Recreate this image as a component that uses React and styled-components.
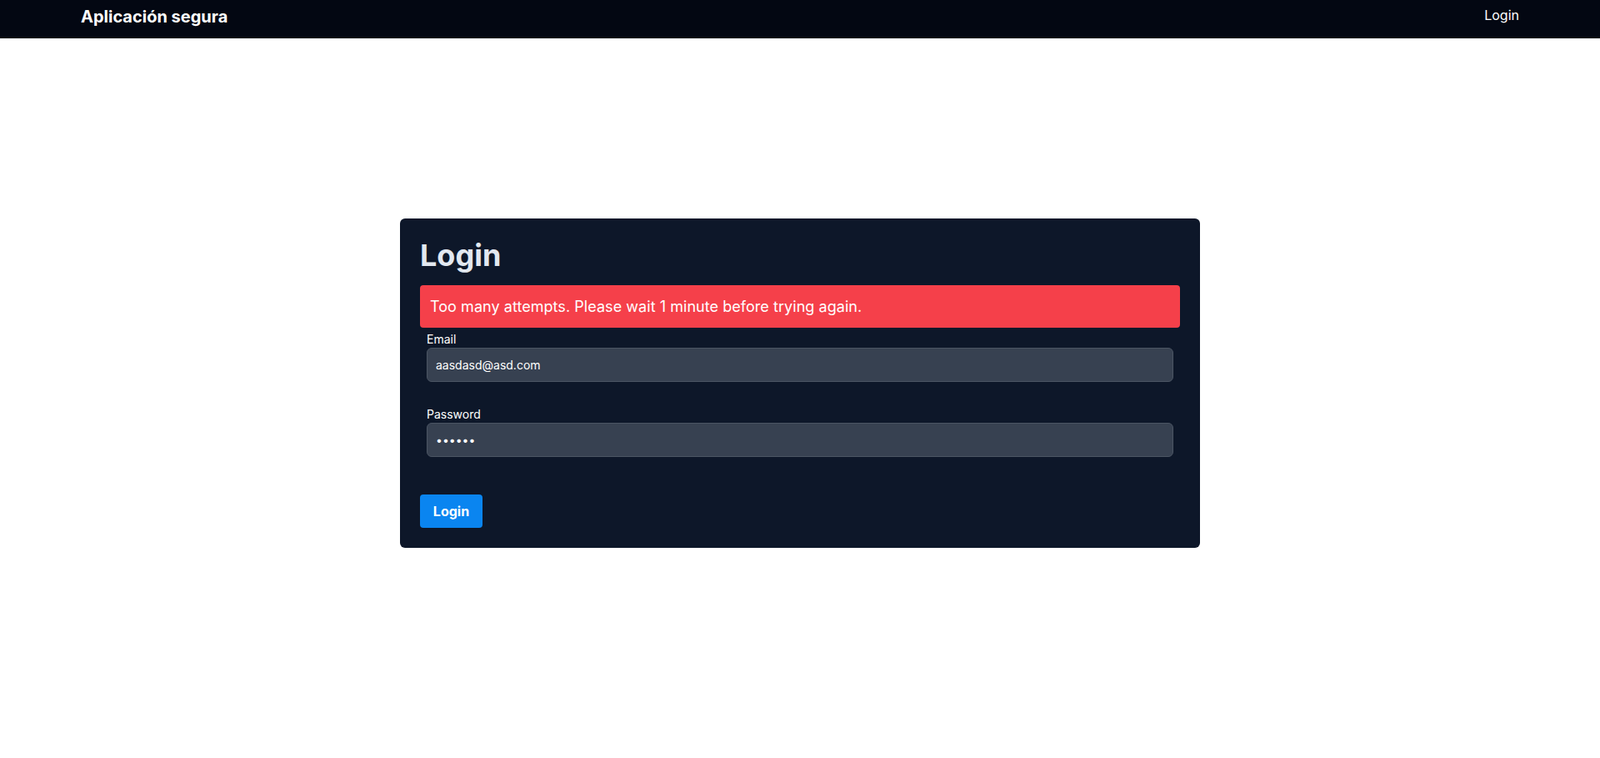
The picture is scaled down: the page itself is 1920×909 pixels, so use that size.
import React, { useState } from 'react';
import styled, { createGlobalStyle } from 'styled-components';

const GlobalStyle = createGlobalStyle`
    * {
        box-sizing: border-box;
    }

    body {
        margin: 0;
        background: #fff;
        font-family: Inter, "Noto Sans", sans-serif;
    }
`;

const Navbar = styled.nav`
    height: 46px;
    display: flex;
    align-items: flex-start;
    justify-content: space-between;
    padding: 6px 97px 0;
    background: #030712;
`;

const Brand = styled.span`
    font-size: 20px;
    line-height: 28px;
    font-weight: 700;
    color: #fff;
`;

const NavLink = styled.a`
    font-size: 16px;
    line-height: 24px;
    color: #fff;
    text-decoration: none;
    cursor: pointer;
`;

const Main = styled.main`
    padding-top: 216px;
`;

const Card = styled.div`
    width: 960px;
    margin: 0 auto;
    padding: 24px;
    background: #0d1729;
    border-radius: 6px;
`;

const Title = styled.h1`
    margin: 0 0 16px;
    font-size: 36px;
    line-height: 40px;
    font-weight: 700;
    color: #e2e8f0;
`;

const Alert = styled.div`
    padding: 12px;
    font-size: 18px;
    line-height: 27px;
    letter-spacing: 0.05px;
    color: #fff;
    background: #f5404a;
    border-radius: 4px;
`;

const Form = styled.form`
    padding: 4px 8px 0;
`;

const Field = styled.div`
    margin-bottom: ${({ $last }) => ($last ? '45px' : '29px')};
`;

const Label = styled.label`
    display: block;
    font-size: 14px;
    line-height: 20px;
    color: #fff;
`;

const Input = styled.input`
    display: block;
    width: 100%;
    height: 41px;
    padding: 0 10px;
    font-family: inherit;
    font-size: 14px;
    color: #fff;
    background: #374151;
    border: 1px solid #4b5563;
    border-radius: 6px;

    &:focus {
        outline: none;
    }
`;

const Button = styled.button`
    margin-left: -8px;
    width: 75px;
    height: 40px;
    font-family: inherit;
    font-size: 16px;
    font-weight: 700;
    color: #fff;
    background: #0a85f0;
    border: none;
    border-radius: 4px;
    cursor: pointer;
`;

export default function App() {
    const [email, setEmail] = useState('aasdasd@asd.com');
    const [password, setPassword] = useState('123456');

    return (
        <>
            <GlobalStyle />
            <Navbar>
                <Brand>Aplicación segura</Brand>
                <NavLink>Login</NavLink>
            </Navbar>
            <Main>
                <Card>
                    <Title>Login</Title>
                    <Alert>Too many attempts. Please wait 1 minute before trying again.</Alert>
                    <Form onSubmit={(e) => e.preventDefault()}>
                        <Field>
                            <Label htmlFor="email">Email</Label>
                            <Input id="email" type="email" value={email} onChange={(e) => setEmail(e.target.value)} />
                        </Field>
                        <Field $last>
                            <Label htmlFor="password">Password</Label>
                            <Input id="password" type="password" value={password} onChange={(e) => setPassword(e.target.value)} />
                        </Field>
                        <Button type="submit">Login</Button>
                    </Form>
                </Card>
            </Main>
        </>
    );
}
